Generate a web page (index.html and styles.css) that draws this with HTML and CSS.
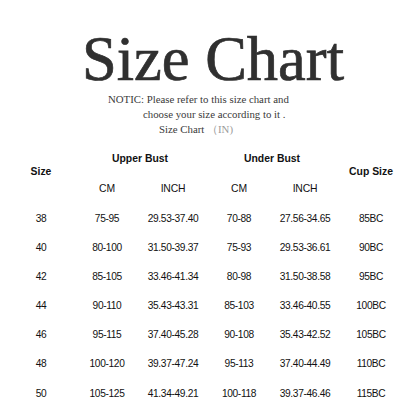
FILE: index.html
```html
<!DOCTYPE html>
<html>
<head>
<meta charset="utf-8">
<link rel="stylesheet" href="styles.css">
</head>
<body>
<div class="page">
  <h1 class="title">Size Chart</h1>
  <div class="notice">
    <div class="l1">NOTIC: Please refer to this size chart and</div>
    <div class="l2">choose your size according to it .</div>
    <div class="l3">Size Chart <span class="unit">（IN)</span></div>
  </div>
  <div class="chart">
    <div class="h span2 c1">Size</div>
    <div class="h grp c2">Upper Bust</div>
    <div class="h grp c4">Under Bust</div>
    <div class="h span2 c6">Cup Size</div>
    <div class="sub c2">CM</div>
    <div class="sub c3">INCH</div>
    <div class="sub c4">CM</div>
    <div class="sub c5">INCH</div>

    <div class="d">38</div><div class="d">75-95</div><div class="d">29.53-37.40</div><div class="d">70-88</div><div class="d">27.56-34.65</div><div class="d">85BC</div>
    <div class="d">40</div><div class="d">80-100</div><div class="d">31.50-39.37</div><div class="d">75-93</div><div class="d">29.53-36.61</div><div class="d">90BC</div>
    <div class="d">42</div><div class="d">85-105</div><div class="d">33.46-41.34</div><div class="d">80-98</div><div class="d">31.50-38.58</div><div class="d">95BC</div>
    <div class="d">44</div><div class="d">90-110</div><div class="d">35.43-43.31</div><div class="d">85-103</div><div class="d">33.46-40.55</div><div class="d">100BC</div>
    <div class="d">46</div><div class="d">95-115</div><div class="d">37.40-45.28</div><div class="d">90-108</div><div class="d">35.43-42.52</div><div class="d">105BC</div>
    <div class="d">48</div><div class="d">100-120</div><div class="d">39.37-47.24</div><div class="d">95-113</div><div class="d">37.40-44.49</div><div class="d">110BC</div>
    <div class="d">50</div><div class="d">105-125</div><div class="d">41.34-49.21</div><div class="d">100-118</div><div class="d">39.37-46.46</div><div class="d">115BC</div>
  </div>
</div>
</body>
</html>
```
FILE: styles.css
```css
html, body {
  margin: 0;
  padding: 0;
  background: #ffffff;
}
.page {
  width: 416px;
  height: 416px;
  overflow: hidden;
  font-family: "Liberation Sans", Arial, sans-serif;
  color: #111111;
}
.title {
  margin: 28px 0 0 0;
  padding-left: 10px;
  font-family: "Liberation Serif", "Times New Roman", serif;
  font-weight: normal;
  font-size: 62.5px;
  line-height: 62px;
  color: #303030;
  -webkit-text-stroke: 0.7px #303030;
  text-align: center;
}
.notice {
  margin-top: 2px;
  font-family: "Liberation Serif", "Times New Roman", serif;
  font-size: 10.8px;
  line-height: 15px;
  color: #3a3a3a;
}
.l1 { padding-left: 108px; }
.l2 { padding-left: 143px; }
.l3 { padding-left: 159px; }
.unit { color: #9a9a9a; }
.chart {
  margin: 6.7px 0 0 8px;
  display: grid;
  grid-template-columns: repeat(6, 66px);
  grid-template-rows: 30px 30px repeat(7, 29.17px);
  text-align: center;
}
.h {
  font-weight: bold;
  font-size: 10.4px;
  line-height: 30px;
}
.span2 {
  grid-row: 1 / span 2;
  align-self: center;
  padding-bottom: 3px;
}
.c1 { grid-column: 1; }
.c2 { grid-column: 2; }
.c3 { grid-column: 3; }
.c4 { grid-column: 4; }
.c5 { grid-column: 5; }
.c6 { grid-column: 6; }
.grp.c2 { grid-row: 1; grid-column: 2 / span 2; }
.grp.c4 { grid-row: 1; grid-column: 4 / span 2; }
.sub {
  grid-row: 2;
  font-size: 10.4px;
  line-height: 30px;
  letter-spacing: -0.2px;
}
.d {
  font-size: 10.2px;
  line-height: 29.17px;
  letter-spacing: -0.35px;
}
```
